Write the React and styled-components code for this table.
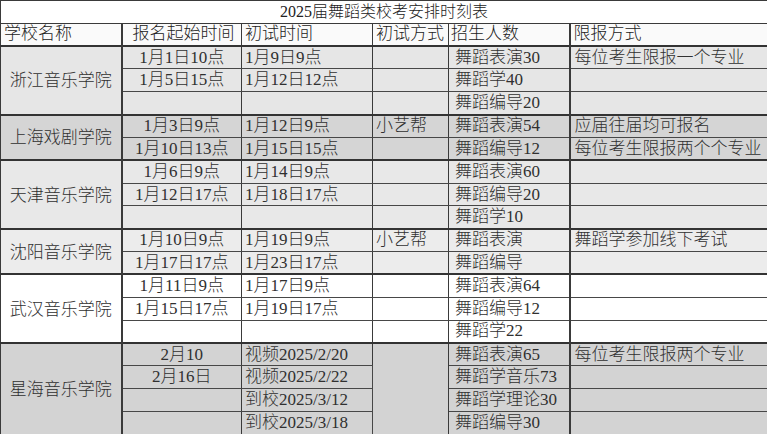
import React from "react";
import styled, { createGlobalStyle } from "styled-components";

const Global = createGlobalStyle`
  html, body { margin: 0; padding: 0; background: #ffffff; }
  body { font-family: "Liberation Serif", "Noto Sans CJK SC", serif; color: #262626; }
`;

const Table = styled.table`
  width: 767px;
  height: 434px;
  border-collapse: collapse;
  table-layout: fixed;
  font-family: "Liberation Serif", "Noto Sans CJK SC", serif;
  font-size: 17px;
  font-weight: 300;
  line-height: 20px;
  color: #303030;
`;

const Row = styled.tr`
  height: 22.84px;
`;

const TitleCell = styled.td`
  border: 1px solid #3a3a3a;
  background: #ffffff;
  text-align: center;
  font-size: 16px;
  padding: 0 0 0 0;
  color: #222;
`;

const HeaderCell = styled.td`
  border: 1px solid #3a3a3a;
  border-right-width: ${(p) => (p.$thickRight ? "2px" : "1px")};
  background: #fafafa;
  text-align: left;
  padding: 0 0 0 ${(p) => p.$pad || 3}px;
  white-space: nowrap;
  overflow: hidden;
  color: #222;
`;

const SchoolCell = styled.td`
  border: 1px solid #3a3a3a;
  border-top: 2px solid #333;
  border-right: 2px solid #3a3a3a;
  background: ${(p) => p.$bg};
  text-align: center;
  padding: 2px 0 0 0;
  white-space: nowrap;
`;

const DataCell = styled.td`
  border: 1px solid #474747;
  border-top: ${(p) => (p.$groupTop ? "2px solid #333" : "1px solid #474747")};
  border-right-width: ${(p) => (p.$thickRight ? "2px" : "1px")};
  border-right-color: #3a3a3a;
  background: ${(p) => p.$bg};
  text-align: ${(p) => p.$align || "left"};
  padding: 0 0 0 ${(p) => (p.$align === "center" ? 0 : p.$pad || 3)}px;
  white-space: nowrap;
  overflow: hidden;
`;

const groups = [
  {
    name: "浙江音乐学院",
    bg: "#e6e6e6",
    rows: [
      ["1月1日10点", "1月9日9点", "", "舞蹈表演30", "每位考生限报一个专业"],
      ["1月5日15点", "1月12日12点", "", "舞蹈学40", ""],
      ["", "", "", "舞蹈编导20", ""],
    ],
  },
  {
    name: "上海戏剧学院",
    bg: "#d5d5d5",
    rows: [
      ["1月3日9点", "1月12日9点", "小艺帮", "舞蹈表演54", "应届往届均可报名"],
      ["1月10日13点", "1月15日15点", "", "舞蹈编导12", "每位考生限报两个个专业"],
    ],
  },
  {
    name: "天津音乐学院",
    bg: "#e8e8e8",
    rows: [
      ["1月6日9点", "1月14日9点", "", "舞蹈表演60", ""],
      ["1月12日17点", "1月18日17点", "", "舞蹈编导20", ""],
      ["", "", "", "舞蹈学10", ""],
    ],
  },
  {
    name: "沈阳音乐学院",
    bg: "#ececec",
    rows: [
      ["1月10日9点", "1月19日9点", "小艺帮", "舞蹈表演", "舞蹈学参加线下考试"],
      ["1月17日17点", "1月23日17点", "", "舞蹈编导", ""],
    ],
  },
  {
    name: "武汉音乐学院",
    bg: "#ffffff",
    rows: [
      ["1月11日9点", "1月17日9点", "", "舞蹈表演64", ""],
      ["1月15日17点", "1月19日17点", "", "舞蹈编导12", ""],
      ["", "", "", "舞蹈学22", ""],
    ],
  },
  {
    name: "星海音乐学院",
    bg: "#d3d3d3",
    mergeMethod: true,
    rows: [
      ["2月10", "视频2025/2/20", "", "舞蹈表演65", "每位考生限报两个专业"],
      ["2月16日", "视频2025/2/22", "", "舞蹈学音乐73", ""],
      ["", "到校2025/3/12", "", "舞蹈学理论30", ""],
      ["", "到校2025/3/18", "", "舞蹈编导30", ""],
    ],
  },
];

export default function App() {
  return (
    <>
      <Global />
      <Table>
        <colgroup>
          <col style={{ width: 121 }} />
          <col style={{ width: 120 }} />
          <col style={{ width: 131 }} />
          <col style={{ width: 76 }} />
          <col style={{ width: 121 }} />
          <col style={{ width: 198 }} />
        </colgroup>
        <tbody>
          <Row>
            <TitleCell colSpan={6}>2025届舞蹈类校考安排时刻表</TitleCell>
          </Row>
          <Row>
            <HeaderCell $thickRight>学校名称</HeaderCell>
            <HeaderCell $pad={10}>报名起始时间</HeaderCell>
            <HeaderCell>初试时间</HeaderCell>
            <HeaderCell>初试方式</HeaderCell>
            <HeaderCell $pad={2} $thickRight>招生人数</HeaderCell>
            <HeaderCell>限报方式</HeaderCell>
          </Row>
          {groups.map((g) =>
            g.rows.map((r, i) => {
              const top = i === 0;
              return (
                <Row key={g.name + i}>
                  {top && (
                    <SchoolCell rowSpan={g.rows.length} $bg={g.bg}>
                      {g.name}
                    </SchoolCell>
                  )}
                  <DataCell $bg={g.bg} $groupTop={top} $align="center">
                    {r[0]}
                  </DataCell>
                  <DataCell $bg={g.bg} $groupTop={top}>
                    {r[1]}
                  </DataCell>
                  {g.mergeMethod ? (
                    top && (
                      <DataCell rowSpan={g.rows.length} $bg={g.bg} $groupTop>
                        {r[2]}
                      </DataCell>
                    )
                  ) : (
                    <DataCell $bg={g.bg} $groupTop={top}>
                      {r[2]}
                    </DataCell>
                  )}
                  <DataCell $bg={g.bg} $groupTop={top} $pad={6} $thickRight>
                    {r[3]}
                  </DataCell>
                  <DataCell $bg={g.bg} $groupTop={top} $pad={4}>
                    {r[4]}
                  </DataCell>
                </Row>
              );
            })
          )}
        </tbody>
      </Table>
    </>
  );
}
